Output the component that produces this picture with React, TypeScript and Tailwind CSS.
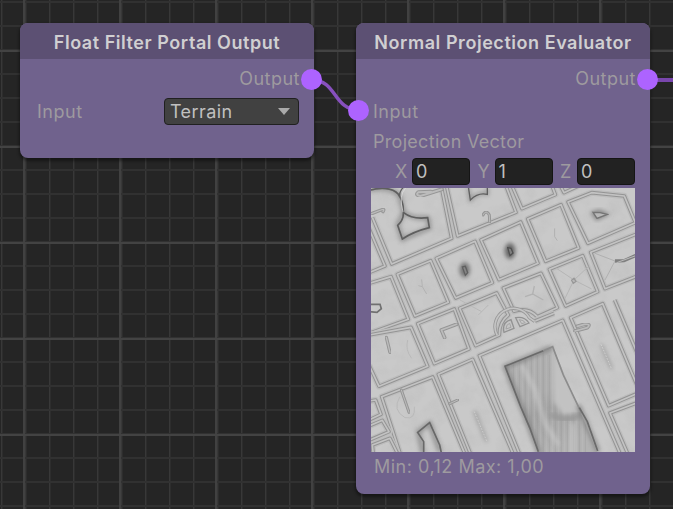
import React from "react";

const range = (n: number) => Array.from({ length: n }, (_, i) => i);

function Grid() {
  return (
    <svg className="absolute inset-0" width="673" height="509">
      {range(29).map((i) => (
        <rect key={"v" + i} x={i * 24 + 1} y="0" width="1" height="509" fill="#383838" />
      ))}
      {range(29).map((i) => (
        <rect key={"w" + i} x={i * 24 + 2} y="0" width="1" height="509" fill="#2d2d2d" />
      ))}
      {range(22).map((i) => (
        <rect key={"h" + i} x="0" y={i * 24 + 1} width="673" height="2" fill="#313131" />
      ))}
      {range(7).map((i) => (
        <rect key={"V" + i} x={i * 96 + 23} y="0" width="2" height="509" fill="#414141" />
      ))}
      {range(5).map((i) => (
        <rect key={"H" + i} x="0" y={i * 96 + 50} width="673" height="2" fill="#434343" />
      ))}
    </svg>
  );
}

const topLeft = [
  "M22 112L80 252L260 175L228 15",
  "M244 15L278 168L453 97L422 15",
  "M12 145L60 258L12 278",
  "M97 283L197 242L250 367L150 408Z",
  "M214 235L330 184L382 308L272 354Z",
  "M348 180L467 126L519 250L402 299Z",
  "M12 310L78 290L130 418L12 460",
];
const topRight = [
  "M83 117L183 74L236 204L137 244Z",
  "M148 268L248 227L293 335L197 378Z",
  "M204 66L275 38L373 48L406 128L264 190Z",
  "M415 160L272 217L315 326L415 287",
  "M35 15L66 86L166 44L155 15",
  "M180 15L192 38L235 18",
  "M10 324L123 280L172 383L112 410Q85 380 42 394Z",
];
const bottomLeft = [
  "M158 26L268 -18L312 102L208 146Z",
  "M284 -20L395 -66L430 0Q402 22 403 60L332 92Z",
  "M12 60L138 37L188 154L42 214L12 150",
  "M110 430L50 245L203 186L305 430",
  "M318 420L220 178L323 133L450 430",
  "M12 258L32 255L48 298L12 315",
  "M12 333L52 316L72 350L12 376",
  "M25 420L22 390L75 370L100 420",
];
const bottomRight = [
  "M60 420L-62 122L188 16L362 420",
  "M212 8L308 -34L420 232L326 272Z",
  "M420 260L330 294L385 420",
  "M344 -45L415 122",
  "M105 18L162 -5",
];

function Blocks({ paths }: { paths: string[] }) {
  return (
    <g fill="none" strokeLinejoin="round" filter="url(#fine)">
      {paths.map((d) => (
        <g key={d}>
          <path d={d} stroke="#bdbdbd" strokeWidth="19" />
          <path d={d} stroke="#949494" strokeWidth="11" />
          <path d={d} stroke="#c3c3c3" strokeWidth="5" />
        </g>
      ))}
    </g>
  );
}

function Groove({ d, w = 10 }: { d: string; w?: number }) {
  return (
    <g fill="none" strokeLinecap="round" strokeLinejoin="round" filter="url(#fine)">
      <path d={d} stroke="#969696" strokeWidth={w} />
      <path d={d} stroke="#bcbcbc" strokeWidth={w - 6} />
    </g>
  );
}

function TerrainPreview() {
  return (
    <svg className="block h-[264px] w-[264px]" viewBox="0 0 264 264">
      <defs>
        <filter id="soft" x="-40%" y="-40%" width="180%" height="180%">
          <feGaussianBlur stdDeviation="6" />
        </filter>
        <filter id="fine" x="-10%" y="-10%" width="120%" height="120%">
          <feGaussianBlur stdDeviation="1.3" />
        </filter>
        <filter id="mottle" x="0" y="0" width="100%" height="100%">
          <feTurbulence type="fractalNoise" baseFrequency="0.055" numOctaves="3" seed="8" />
          <feColorMatrix values="0 0 0 0 .5  0 0 0 0 .5  0 0 0 0 .5  1.2 0 0 0 -.48" />
        </filter>
        <linearGradient id="roof" x1="0" y1="0" x2="0.4" y2="1">
          <stop offset="0" stopColor="#b0b0b0" />
          <stop offset="0.5" stopColor="#aeaeae" />
          <stop offset="0.65" stopColor="#a3a3a3" />
          <stop offset="1" stopColor="#b3b3b3" />
        </linearGradient>
        <clipPath id="roofClip">
          <path d="M15 155L158 95L245 300L295 420H118Z" />
        </clipPath>
      </defs>
      <rect width="264" height="264" fill="#c9c9c9" />
      <rect width="264" height="264" filter="url(#mottle)" opacity="0.8" />

      <g transform="translate(-6 -8) scale(.33333)">
        <Blocks paths={topLeft} />
        <g fill="none">
          <g stroke="#777" filter="url(#soft)" opacity="0.65">
            <path d="M12 30Q75 15 104 48Q112 80 116 96Q140 118 188 113L194 144L112 178L98 136L116 96" strokeWidth="13" />
            <path d="M310 24L316 60Q340 36 367 42V24" strokeWidth="9" />
          </g>
          <g stroke="#5f5f5f" strokeWidth="5" filter="url(#fine)">
            <path d="M12 31C60 18 95 28 104 50C120 75 112 90 116 98Q142 119 188 113L193 143Q145 155 112 177L98 136Q116 120 115 98" />
            <path d="M104 50Q102 32 120 18M310 20L316 60Q340 36 367 43V20" strokeWidth="4" />
          </g>
          <path d="M114 96Q100 45 122 24" stroke="#e2e2e2" strokeWidth="2" />
          <path d="M160 317L172 320L170 298M172 320L185 342" stroke="#b2b2b2" strokeWidth="3" filter="url(#fine)" />
          <path d="M285 360L350 395M370 375L340 405" stroke="#b8b8b8" strokeWidth="3" filter="url(#fine)" />
        </g>
        <Groove d="M20 101L48 90Q61 84 54 95" />
        <Groove d="M230 28L166 48Q150 45 160 37L198 35" w={12} />
        <Groove d="M354 105Q363 87 373 105L374 126" w={9} />
        <ellipse cx="299" cy="270" rx="16" ry="23" fill="#777" filter="url(#soft)" />
        <path d="M292 261L301 259L308 278L301 286Z" fill="#858585" stroke="#606060" strokeWidth="4" filter="url(#fine)" />
        <path d="M12 373H45L49 386L36 397L12 395" fill="none" stroke="#707070" strokeWidth="5" filter="url(#fine)" />
      </g>

      <g transform="translate(129 -8) scale(.33333)">
        <Blocks paths={topRight} />
        <ellipse cx="30" cy="213" rx="16" ry="24" fill="#666" filter="url(#soft)" />
        <path d="M23 203L33 205L39 219L30 227Z" fill="#808080" stroke="#505050" strokeWidth="4" filter="url(#fine)" />
        <path d="M276 98L298 92L322 103L290 118Z" fill="#888" stroke="#888" strokeWidth="8" filter="url(#soft)" />
        <path d="M279 97L300 98L322 103L291 115Z" fill="#b8b8b8" stroke="#747474" strokeWidth="4" filter="url(#fine)" />
        <g fill="none" filter="url(#fine)">
          <path d="M164 145V170L172 182" stroke="#b0b0b0" strokeWidth="3" />
          <path d="M165 262L222 300L265 260M222 300L195 355M222 300L275 327" stroke="#b5b5b5" strokeWidth="3" />
          <path d="M215 301L222 295L228 304L220 310Z" stroke="#989898" strokeWidth="4" />
          <path d="M75 350L98 342L130 360M98 342L103 318" stroke="#b2b2b2" strokeWidth="4" />
          <path d="M285 220L345 243L315 300" stroke="#b0b0b0" strokeWidth="3" />
          <path d="M345 243L372 242L410 225" stroke="#808080" strokeWidth="10" />
          <path d="M350 248L410 226" stroke="#bbb" strokeWidth="3" />
        </g>
      </g>

      <g transform="translate(-6 127) scale(.33333)">
        <Blocks paths={bottomLeft} />
        <Groove d="M64 67L75 112" />
        <Groove d="M275 28L229 45L239 68" w={11} />
        <Groove d="M109 225L132 292" w={9} />
        <Groove d="M254 266L278 255" w={9} />
        <g fill="none">
          <path d="M174 415L160 350L194 325L225 410" stroke="#777" strokeWidth="14" filter="url(#soft)" opacity=".65" />
          <path d="M176 418V380L158 352L194 323L224 390L230 418" stroke="#686868" strokeWidth="5" filter="url(#fine)" />
          <path d="M128 75Q120 105 140 130M105 245Q80 285 120 308Q152 315 148 275" stroke="#b9b9b9" strokeWidth="3" filter="url(#fine)" />
          <path d="M328 288L365 380" stroke="#999" strokeWidth="8" filter="url(#soft)" />
          <path d="M328 290L365 378" stroke="#d8d8d8" strokeWidth="2" strokeDasharray="5 4" />
        </g>
      </g>

      <g transform="translate(129 127) scale(.33333)">
        <Blocks paths={bottomRight} />
        <path d="M15 155L158 95L245 300L295 420H118Z" fill="url(#roof)" />
        <g clipPath="url(#roofClip)">
          {range(27).map((i) => (
            <path
              key={i}
              d={`M${22 + i * 9} ${i % 3 === 0 ? 90 : 120}V420`}
              stroke={i % 2 ? "#c4c4c4" : "#969696"}
              strokeWidth={i % 3 ? 3 : 5}
              opacity=".32"
            />
          ))}
          <path d="M65 150L105 225L135 325L175 390M218 325V420" fill="none" stroke="#cbcbcb" strokeWidth="12" opacity=".75" filter="url(#soft)" />
          <path d="M158 95L245 290L190 300L160 260Z" fill="#c2c2c2" filter="url(#soft)" />
          <path d="M150 298Q200 325 245 298" fill="none" stroke="#999" strokeWidth="16" filter="url(#soft)" />
        </g>
        <g fill="none">
          <path d="M155 97L15 155L70 290L118 415M235 270L295 410" stroke="#777" strokeWidth="14" filter="url(#soft)" opacity=".7" />
          <g filter="url(#fine)">
            <path d="M130 107L15 154L62 275L90 340L115 410" stroke="#6a6a6a" strokeWidth="5" />
            <path d="M130 107L158 95L190 180L245 295" stroke="#8c8c8c" strokeWidth="5" />
            <path d="M238 278L262 320L293 408" stroke="#6a6a6a" strokeWidth="5" />
          </g>
          <path d="M303 88L335 162" stroke="#999" strokeWidth="8" filter="url(#soft)" />
          <path d="M303 88L335 162" stroke="#ddd" strokeWidth="2" strokeDasharray="5 4" />
          <g filter="url(#fine)">
            <path d="M-8 62A55 55 0 0 1 88 8L104 19" stroke="#989898" strokeWidth="10" />
            <path d="M-8 62A55 55 0 0 1 88 8L104 19" stroke="#c4c4c4" strokeWidth="5" />
            <path d="M12 52Q5 22 33 14L42 40Z" stroke="#929292" strokeWidth="4" />
            <path d="M47 8Q73 3 87 24L60 35Z" stroke="#929292" strokeWidth="4" />
            <path d="M18 42Q18 28 29 25L33 37ZM58 14Q70 15 76 23L65 26Z" stroke="#a4a4a4" strokeWidth="3" />
          </g>
        </g>
        <Groove d="M225 48L262 38Q275 26 253 28L232 34" w={11} />
      </g>
    </svg>
  );
}

function Node({ title, className, children }: { title: string; className: string; children: React.ReactNode }) {
  return (
    <section className={"absolute w-[294px] rounded-[8px] bg-[#70628d] shadow-[0_2px_3px_1px_rgba(0,0,0,0.4)] " + className}>
      <h2 className="flex h-9 items-center justify-center rounded-t-[8px] bg-[#5c5073] pt-[3px] text-[18px] font-semibold tracking-[0.55px] text-[#d0cfd1]">
        {title}
      </h2>
      {children}
    </section>
  );
}

function Port({ className }: { className: string }) {
  return <span className={"absolute size-[21px] rounded-full bg-[#ad63ff] " + className} />;
}

function Field({ axis, value }: { axis: string; value: string }) {
  return (
    <label className="flex items-center">
      <span className="w-[17px]">{axis}</span>
      <span className="flex h-[27px] w-[58px] items-center rounded-[4px] border border-[#151515] bg-[#222] pl-[3px] text-[#c0c0c0]">
        {value}
      </span>
    </label>
  );
}

export default function App() {
  return (
    <main className="relative h-[509px] w-[673px] overflow-hidden bg-[#252525] font-['Inter',sans-serif] text-[18px] leading-6 tracking-[0.5px] whitespace-nowrap text-[#9e9a9f]">
      <Grid />
      <Node title="Float Filter Portal Output" className="top-[23px] left-[20px] h-[135px]">
        <div className="flex h-[39px] items-center justify-end pt-px pr-[14px]">Output</div>
        <div className="flex h-[27px] items-center justify-between pr-[15px] pl-[17px]">
          <span>Input</span>
          <div className="flex h-[27px] w-[135px] items-center justify-between rounded-[4px] border border-[#202020] bg-[#414141] pr-2 pl-[5px] tracking-[0.4px] text-[#c0c0c0]">
            Terrain
            <svg width="12" height="7"><path d="M0 0H12L6 7Z" fill="#aaa" /></svg>
          </div>
        </div>
      </Node>
      <Node title="Normal Projection Evaluator" className="top-[23px] left-[356px] h-[471px]">
        <div className="flex h-10 items-center justify-end pr-[14px]">Output</div>
        <div className="pt-px pl-[17px]">Input</div>
        <div className="pt-[6px] pl-[17px] tracking-[0.3px]">Projection Vector</div>
        <div className="mt-1 flex justify-between pr-[15px] pl-[39px]">
          <Field axis="X" value="0" />
          <Field axis="Y" value="1" />
          <Field axis="Z" value="0" />
        </div>
        <div className="mt-[3px] ml-[15px]"><TerrainPreview /></div>
        <div className="pt-[3px] pl-[18px]">Min: 0,12 Max: 1,00</div>
      </Node>
      <svg className="absolute inset-0" width="673" height="509" fill="none">
        <path d="M312 80C337 80 333 110 359 110" stroke="#8750be" strokeWidth="3.5" />
        <path d="M648 80H673" stroke="#7946ad" strokeWidth="4" />
      </svg>
      <Port className="top-[69px] left-[301px]" />
      <Port className="top-[100px] left-[348px]" />
      <Port className="top-[69px] left-[637px]" />
    </main>
  );
}
